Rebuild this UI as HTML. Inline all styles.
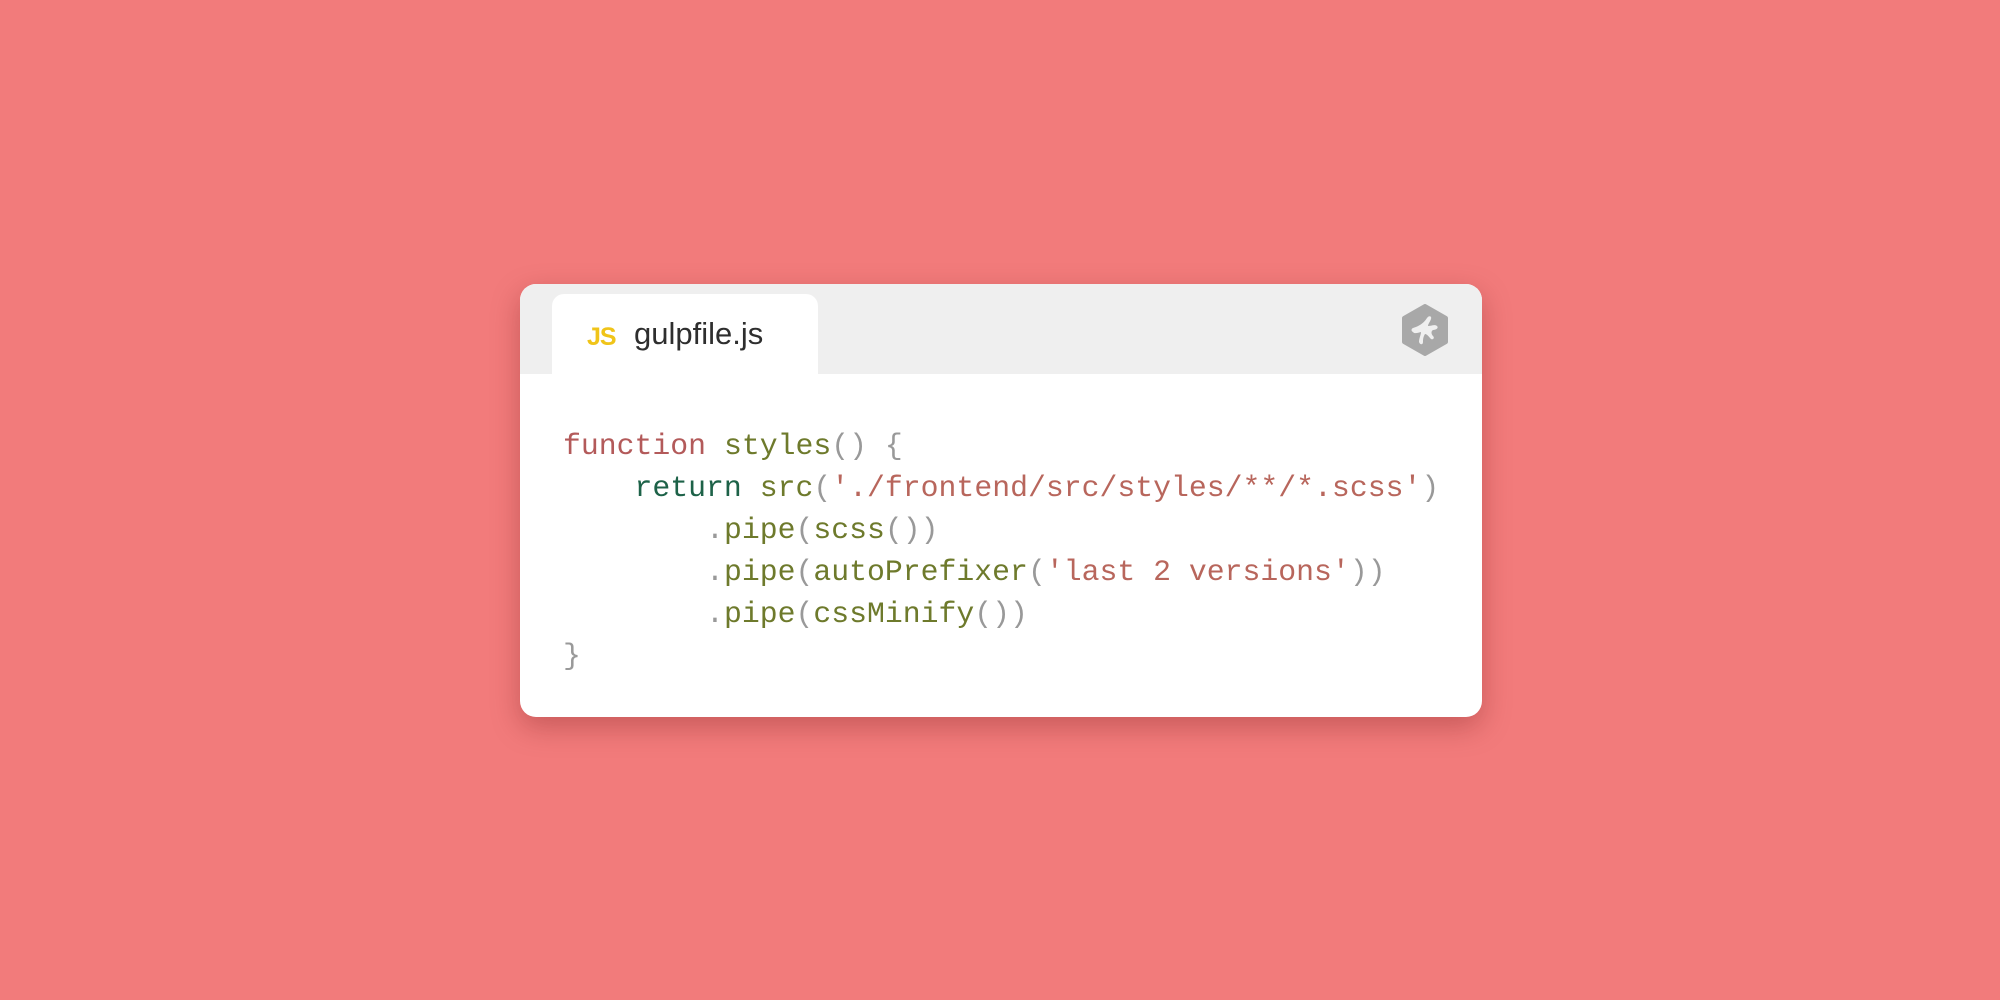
<!DOCTYPE html>
<html><head><meta charset="utf-8"><style>
html,body{margin:0;padding:0}
body{width:2000px;height:1000px;background:#f27b7b;position:relative;overflow:hidden}
.card{position:absolute;left:520px;top:284px;width:962px;height:433px;background:#fff;border-radius:16px;box-shadow:0 10px 28px rgba(120,30,30,0.35);overflow:hidden}
.hdr{position:absolute;left:0;top:0;width:100%;height:90px;background:#efefef}
.tab{position:absolute;left:32px;top:10px;width:266px;height:90px;background:#fff;border-radius:12px 12px 0 0}
.js{position:absolute;left:35px;top:29px;font:bold 25px "Liberation Sans Narrow","Liberation Sans",sans-serif;color:#f0c419;letter-spacing:-1px}
.fn{position:absolute;left:82px;top:22px;font:31px "Liberation Sans",sans-serif;color:#2e2e2e}
.code{position:absolute;left:43px;top:141px;font:29.8px/42px "Liberation Mono",monospace;white-space:pre;color:#999}
.k{color:#b35a5a}.f{color:#6e7a2c}.r{color:#1d6248}.s{color:#b8665c}.p{color:#999}
</style></head><body>
<div class="card">
<div class="hdr"></div>
<div class="tab"><span class="js">JS</span><span class="fn">gulpfile.js</span></div>
<svg style="position:absolute;left:881px;top:20px" width="48" height="52" viewBox="0 0 48 52">
<path d="M24 2 L45 14 L45 38 L24 50 L3 38 L3 14 Z" fill="#a8a8a8" stroke="#a8a8a8" stroke-width="4" stroke-linejoin="round"/>
<path d="M12 24 C18 22 22 20 26 14 C28 11 31 12 30 15 C29 18 27 20 27 22 C30 22 34 20 36 22 C38 24 35 26 32 26 C30 27 30 30 32 32 C34 34 32 36 30 35 C28 33 26 30 24 30 C22 33 22 36 22 38 C22 41 19 41 18 38 C18 34 20 31 20 28 C17 29 13 30 12 28 C10 27 10 25 12 24 Z" fill="#efefef"/>
</svg>
<div class="code"><span class="k">function</span> <span class="f">styles</span>() {
    <span class="r">return</span> <span class="f">src</span>(<span class="s">'./frontend/src/styles/**/*.scss'</span>)
        .<span class="f">pipe</span>(<span class="f">scss</span>())
        .<span class="f">pipe</span>(<span class="f">autoPrefixer</span>(<span class="s">'last 2 versions'</span>))
        .<span class="f">pipe</span>(<span class="f">cssMinify</span>())
}</div>
</div>
</body></html>
